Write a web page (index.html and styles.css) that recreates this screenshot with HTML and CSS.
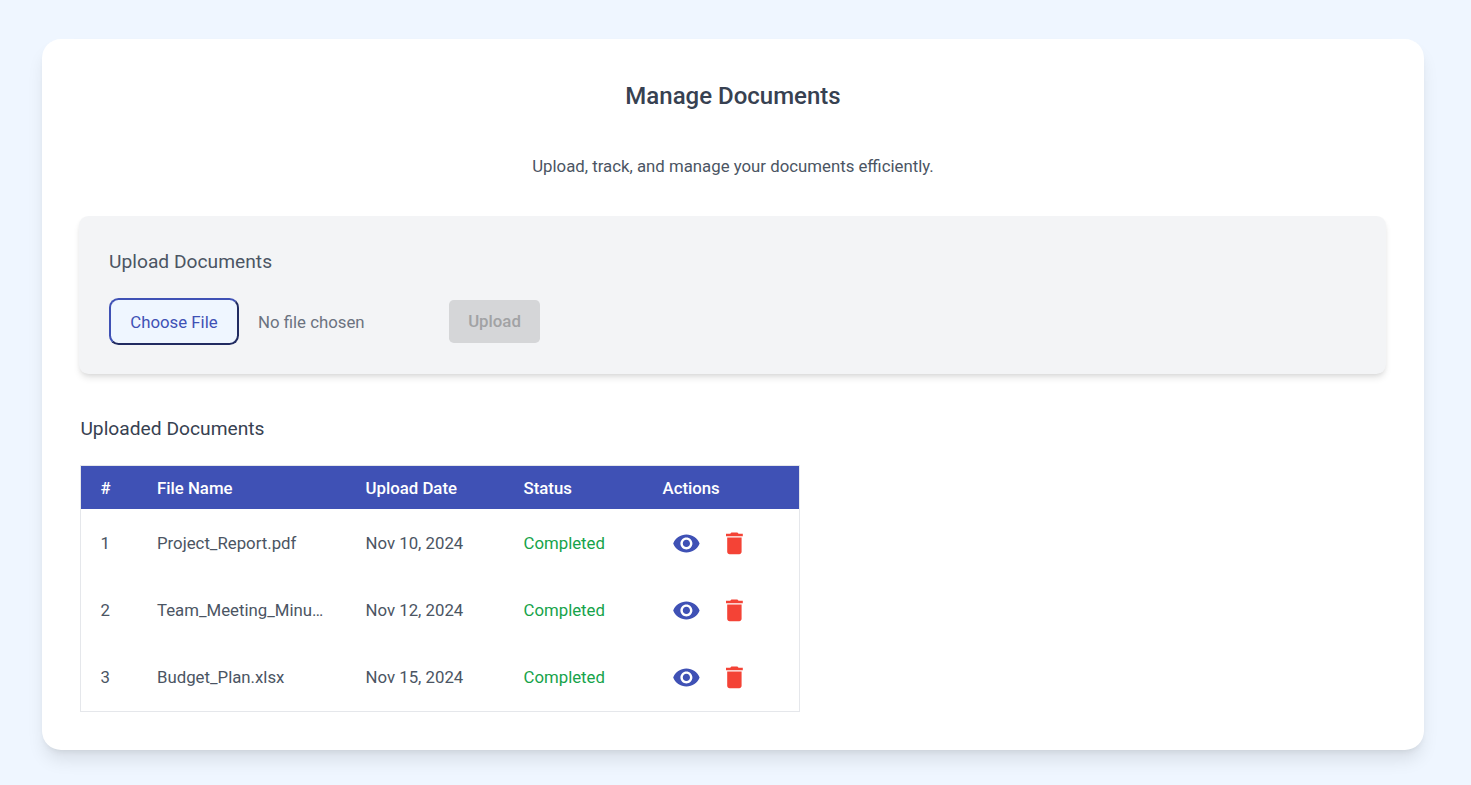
FILE: index.html
```html
<!DOCTYPE html>
<html lang="en">
<head>
<meta charset="utf-8">
<title>Manage Documents</title>
<link rel="stylesheet" href="styles.css">
</head>
<body>
<svg width="0" height="0" class="sprite" aria-hidden="true">
  <symbol id="eye" viewBox="0 0 24 24"><path d="M12 4.5C7 4.5 2.73 7.61 1 12c1.73 4.39 6 7.5 11 7.5s9.27-3.11 11-7.5c-1.73-4.39-6-7.5-11-7.5zM12 17c-2.76 0-5-2.24-5-5s2.24-5 5-5 5 2.24 5 5-2.24 5-5 5zm0-8c-1.66 0-3 1.34-3 3s1.34 3 3 3 3-1.34 3-3-1.34-3-3-3z"/></symbol>
  <symbol id="trash" viewBox="0 0 24 24"><path d="M6 19c0 1.1.9 2 2 2h8c1.1 0 2-.9 2-2V7H6v12zM19 4h-3.5l-1-1h-5l-1 1H5v2h14V4z"/></symbol>
</svg>
<main class="card">
  <h1 class="title">Manage Documents</h1>
  <p class="subtitle">Upload, track, and manage your documents efficiently.</p>
  <section class="upload">
    <h2 class="upload-title">Upload Documents</h2>
    <div class="upload-row">
      <button class="choose" type="button">Choose File</button>
      <span class="file-name">No file chosen</span>
      <button class="submit" type="button" disabled>Upload</button>
    </div>
  </section>
  <h2 class="list-title">Uploaded Documents</h2>
  <table class="docs">
    <thead>
      <tr><th class="col-num">#</th><th class="col-name">File Name</th><th class="col-date">Upload Date</th><th class="col-status">Status</th><th class="col-actions">Actions</th></tr>
    </thead>
    <tbody>
      <tr><td>1</td><td class="name">Project_Report.pdf</td><td>Nov 10, 2024</td><td class="status">Completed</td><td><div class="actions"><svg class="icon view"><use href="#eye"/></svg><svg class="icon delete"><use href="#trash"/></svg></div></td></tr>
      <tr><td>2</td><td class="name">Team_Meeting_Minu…</td><td>Nov 12, 2024</td><td class="status">Completed</td><td><div class="actions"><svg class="icon view"><use href="#eye"/></svg><svg class="icon delete"><use href="#trash"/></svg></div></td></tr>
      <tr><td>3</td><td class="name">Budget_Plan.xlsx</td><td>Nov 15, 2024</td><td class="status">Completed</td><td><div class="actions"><svg class="icon view"><use href="#eye"/></svg><svg class="icon delete"><use href="#trash"/></svg></div></td></tr>
    </tbody>
  </table>
</main>
</body>
</html>
```
FILE: styles.css
```css
* { box-sizing: border-box; }
body {
  margin: 0;
  height: 785px;
  overflow: hidden;
  padding: 39px 47px 0 42px;
  background: #eff6ff;
  font-family: Roboto, sans-serif;
  font-size: 16.8px;
  line-height: 24px;
  color: #4b5563;
}
.sprite { position: absolute; }
h1, h2, p { margin: 0; }
.card {
  height: 711px;
  padding: 38px;
  background: #fff;
  border-radius: 19.2px;
  box-shadow: 0 12px 18px -3.6px rgba(0,0,0,.1), 0 4.8px 7.2px -4.8px rgba(0,0,0,.1);
}
.title {
  height: 38px;
  font-size: 24px;
  line-height: 38px;
  font-weight: 500;
  text-align: center;
  color: #374151;
}
.subtitle { margin-top: 39px; text-align: center; }
.upload {
  height: 158px;
  margin: 38px -.4px 0 -.8px;
  padding: 31px 30px 29px 29.8px;
  background: #f3f4f6;
  border-radius: 9.6px;
  box-shadow: 0 4.8px 7.2px -1.2px rgba(0,0,0,.1), 0 2.4px 4.8px -2.4px rgba(0,0,0,.1);
}
.upload-title, .list-title {
  font-size: 19.2px;
  line-height: 30px;
  font-weight: 400;
  letter-spacing: .02px;
}
.upload-row { display: flex; margin-top: 21px; }
.choose {
  width: 130px;
  height: 47px;
  padding: 0;
  font: inherit;
  color: #3f51b5;
  background: #eff6ff;
  border: 2px outset #3f51b5;
  border-radius: 9.6px;
}
.file-name { width: 191px; margin-left: 19px; line-height: 49px; height: 47px; color: #6b7280; }
.submit {
  width: 91px;
  height: 43px;
  margin-top: 2px;
  padding: 0 0 2px;
  font: inherit;
  font-weight: 500;
  color: #a1a2a4;
  background: #d5d6d8;
  border: 0;
  border-radius: 4.8px;
}
.list-title { margin-top: 40px; padding-left: .4px; color: #374151; }
.docs {
  width: 720px;
  margin-top: 21px;
  table-layout: fixed;
  border-collapse: separate;
  border-spacing: 0;
  border: 1px solid #e5e7eb;
}
.docs th, .docs td { padding: 0 0 0 19.5px; text-align: left; white-space: nowrap; }
.docs th { height: 43px; padding-top: 1px; background: #3f51b5; color: #fff; font-weight: 500; }
.docs td { height: 67.3px; }
.docs .col-name, .docs .name { padding-left: 20px; }
.col-num { width: 56px; }
.col-name { width: 209px; }
.col-date { width: 158px; }
.col-status { width: 139px; }
.docs .status { color: #16a34a; }
.actions { display: flex; gap: 19.2px; padding: .6px 0 0 9.6px; }
.icon { width: 28.8px; height: 28.8px; fill: currentColor; }
.view { color: #3f51b5; }
.delete { color: #f44336; }
```
